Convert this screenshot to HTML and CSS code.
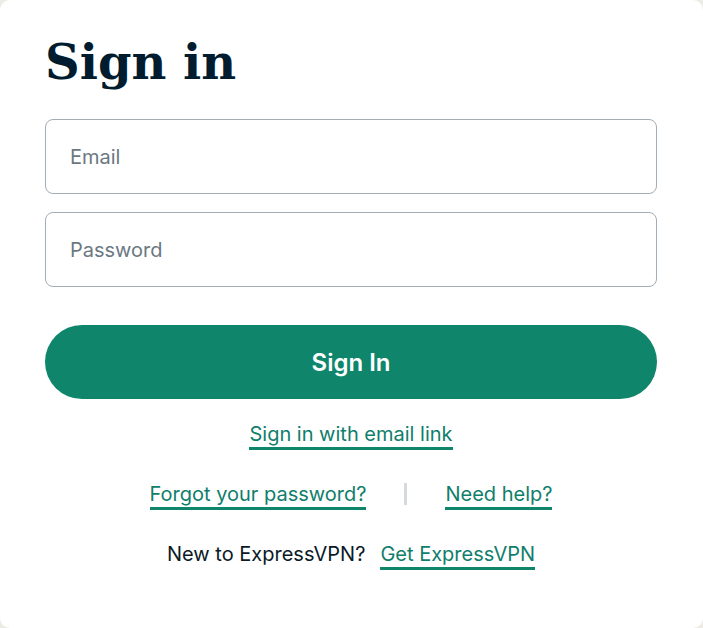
FILE: index.html
```html
<!DOCTYPE html>
<html lang="en">
<head>
<meta charset="utf-8">
<title>Sign in</title>
<link rel="stylesheet" href="styles.css">
</head>
<body>
<main class="card">
  <h1 class="title">Sign in</h1>
  <form class="form">
    <input class="field" type="email" placeholder="Email">
    <input class="field" type="password" placeholder="Password">
    <button class="btn" type="button">Sign In</button>
  </form>
  <div class="links">
    <div class="row"><a class="link" href="#">Sign in with email link</a></div>
    <div class="row row-split">
      <a class="link" href="#">Forgot your password?</a>
      <span class="sep"></span>
      <a class="link" href="#">Need help?</a>
    </div>
    <div class="row"><span class="plain">New to ExpressVPN?</span><a class="link" href="#">Get ExpressVPN</a></div>
  </div>
</main>
</body>
</html>
```
FILE: styles.css
```css
html, body {
  margin: 0;
  padding: 0;
}
body {
  background: #ecebe6;
  font-family: Inter, "Noto Sans", sans-serif;
}
.card {
  box-sizing: border-box;
  width: 703px;
  height: 628px;
  background: #ffffff;
  border-radius: 10px;
  padding: 26px 46px 0 45px;
}
.title {
  margin: 0;
  font-family: "DejaVu Serif", "Liberation Serif", serif;
  font-weight: 700;
  font-size: 48px;
  line-height: 72px;
  color: #011c2e;
  letter-spacing: 0;
}
.form {
  margin-top: 21px;
  display: flex;
  flex-direction: column;
}
.field {
  box-sizing: border-box;
  height: 75px;
  width: 100%;
  border: 1px solid #a3adb5;
  border-radius: 8px;
  padding: 0 24px;
  font-family: Inter, sans-serif;
  font-size: 20px;
  color: #1b2b36;
  background: #fff;
  margin-bottom: 18px;
}
.field::placeholder {
  color: #6b7882;
}
.btn {
  margin-top: 20px;
  height: 74px;
  border: 0;
  border-radius: 37px;
  background: #0f866c;
  color: #fff;
  font-family: Inter, sans-serif;
  font-weight: 600;
  font-size: 24px;
}
.links {
  margin-top: 23px;
  display: flex;
  flex-direction: column;
  gap: 32px;
}
.row {
  display: flex;
  justify-content: center;
  align-items: center;
  gap: 15px;
  font-size: 20px;
  line-height: 24px;
}
.row-split {
  gap: 38px;
}
.link {
  color: #0f7e6b;
  text-decoration: none;
  border-bottom: 3px solid #0f866c;
  padding-bottom: 1px;
}
.plain {
  color: #0b1a26;
  padding-bottom: 4px;
}
.sep {
  width: 3px;
  height: 22px;
  background: #d5dadf;
  margin-bottom: 4px;
}
```
